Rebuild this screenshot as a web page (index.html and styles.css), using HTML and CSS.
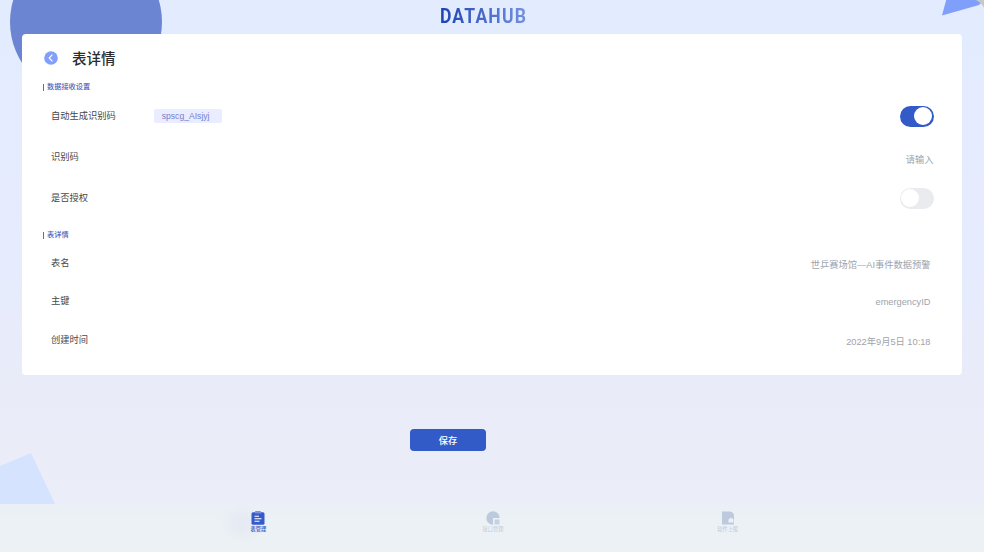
FILE: index.html
```html
<!DOCTYPE html>
<html lang="zh-CN">
<head>
<meta charset="utf-8">
<title>DATAHUB</title>
<link rel="stylesheet" href="styles.css">
</head>
<body>
<div class="app">
  <svg class="backdrop" viewBox="0 0 984 552" aria-hidden="true">
    <circle cx="86" cy="22" r="76" fill="#6b85d2"/>
    <path d="M947 -3L942 15.500L979 5L984 0V-3Z" fill="#809ffb"/>
    <path d="M976 0H984V8Q982 3 976 0Z" fill="#c6c7c9"/>
    <path d="M0 466L31 453L55 504H0Z" fill="#d5e3ff"/>
  </svg>
  <header class="header"><h1 class="logo">DATAHUB</h1></header>
  <main class="card">
    <div class="title-row">
      <svg class="back" viewBox="0 0 14 14"><circle cx="7" cy="7" r="6.800" fill="#82a0fa"/><path d="M8.400 3.700L5.200 7L8.400 10.300" fill="none" stroke="#fff" stroke-width="1.100"/></svg>
      <h2 class="title">表详情</h2>
    </div>
    <h3 class="section">数据接收设置</h3>
    <div class="rows rows-settings">
      <div class="row"><span class="label">自动生成识别码</span><span class="tag">spscg_AIsjyj</span><span class="switch on"></span></div>
      <div class="row"><span class="label">识别码</span><span class="value placeholder">请输入</span></div>
      <div class="row"><span class="label">是否授权</span><span class="switch"></span></div>
    </div>
    <h3 class="section">表详情</h3>
    <div class="rows rows-detail">
      <div class="row"><span class="label">表名</span><span class="value">世乒赛场馆—AI事件数据预警</span></div>
      <div class="row"><span class="label">主键</span><span class="value">emergencyID</span></div>
      <div class="row"><span class="label">创建时间</span><span class="value">2022年9月5日 10:18</span></div>
    </div>
  </main>
  <div class="actions"><button class="save">保存</button></div>
  <nav class="tabs">
    <div class="tab active">
      <svg viewBox="0 0 14 14"><rect x=".5" y="1.200" width="13" height="12.600" rx="1.500" fill="#355bcb"/><rect x="4" y="0" width="6" height="2.500" rx=".6" fill="#7f8fdb"/><path d="M3.500 5.300H8M3.500 7.700H10.500M3.500 10.200H8.500" stroke="#fff" stroke-width="1.100"/></svg>
      <span>表管理</span>
    </div>
    <div class="tab">
      <svg viewBox="0 0 14 14"><path d="M7 0.300A6.700 6.700 0 1 0 7 13.700V7H13.700A6.700 6.700 0 0 0 7 .3Z" fill="#bdc9dd"/><rect x="8.500" y="8.500" width="5" height="5" rx=".5" fill="#c7d1e1"/></svg>
      <span>接口管理</span>
    </div>
    <div class="tab">
      <svg viewBox="0 0 14 14"><path d="M1 .5H9Q13 1 13 5V13.500H1Z" fill="#bdc9dd"/><path d="M7.500 8.500L10 6.500L12.500 8.500V11.500H7.500Z" fill="#edf1f7"/></svg>
      <span>软件上报</span>
    </div>
  </nav>
</div>
</body>
</html>
```
FILE: styles.css
```css
* { box-sizing: border-box; }
body { margin: 0; font-family: "Liberation Sans", "Noto Sans CJK SC", sans-serif; }
h1, h2, h3 { margin: 0; }
.app {
  position: relative;
  display: flex;
  flex-direction: column;
  width: 984px;
  height: 552px;
  overflow: hidden;
  background: linear-gradient(180deg, #e3ebff 0%, #e6ecfd 50%, #e9ebf8 70%, #ebeef8 90%);
}
.backdrop { position: absolute; inset: 0; width: 984px; height: 552px; }
.header { position: relative; height: 34px; display: flex; justify-content: center; }
.logo {
  font: 700 20px/32px Roboto, sans-serif;
  letter-spacing: 1.300px;
  margin-right: 17px;
  transform: scaleX(.88);
  color: transparent;
  background: linear-gradient(90deg, #1b43b2, #7491df);
  background-clip: text;
}
.card {
  position: relative;
  width: 940px;
  height: 341px;
  margin-left: 22px;
  padding: 12px 28.500px 0 21px;
  border-radius: 4px;
  background: #fff;
}
.title-row { display: flex; align-items: center; gap: 14px; height: 25px; padding-left: 1px; }
.back { width: 14px; height: 14px; margin-bottom: 1px; }
.title { font-size: 14.500px; font-weight: 500; line-height: 24px; color: #2c2c30; }
.section {
  display: flex;
  align-items: center;
  gap: 3px;
  height: 10px;
  margin-top: 11px;
  font-size: 7.200px;
  font-weight: 500;
  line-height: 10px;
  color: #4a62ba;
}
.section::before { content: ""; width: 1px; height: 7px; background: #5570bb; }
.rows { display: flex; flex-direction: column; padding-left: 8px; }
.row { display: flex; align-items: center; }
.rows-settings { padding-top: 3.500px; }
.rows-settings .row { height: 41px; }
.rows-settings + .section { margin-top: 11.500px; }
.rows-detail { padding-top: 3px; }
.rows-detail .row { height: 38.500px; }
.label { margin-bottom: 2px; font-size: 9.250px; color: #47484c; }
.rows-detail .label { margin-bottom: 1px; }
.tag {
  margin-left: 38px;
  margin-bottom: 1px;
  width: 68px;
  height: 14px;
  padding-left: 8px;
  border-radius: 2px;
  background: #e9edff;
  color: #747fce;
  font-size: 8.600px;
  line-height: 14px;
  white-space: nowrap;
}
.value { margin: 3px 3px 0 auto; font-size: 9.250px; color: #a0a3aa; }
.placeholder { margin-right: 0; }
.switch { width: 34px; height: 21px; margin-left: auto; padding: 1.500px; border-radius: 11px; background: #e9ebee; display: flex; }
.switch::before { content: ""; width: 18px; height: 18px; border-radius: 50%; background: #fff; }
.switch.on { background: #335bc8; justify-content: flex-end; }
.actions { position: relative; height: 129px; padding: 54px 0 0 410px; }
.save {
  display: block;
  width: 76px;
  height: 22px;
  padding: 0;
  border: 0;
  border-radius: 4px;
  background: #335bc8;
  color: #fff;
  font: 500 9.200px/21px "Noto Sans CJK SC", sans-serif;
}
.tabs {
  position: relative;
  height: 48px;
  padding: 0 139px 0 141px;
  display: grid;
  grid-template-columns: repeat(3, 1fr);
  background: radial-gradient(ellipse 22px 20px at 242px 19px, #e4e9f3, transparent), linear-gradient(#ebeff7, #ecf1f5 30%);
}
.tab { display: flex; flex-direction: column; align-items: center; padding-top: 7px; font-size: 5.200px; line-height: 8px; color: #bdc8da; }
.tab svg { width: 14px; height: 14px; }
.tab.active { color: #4d69ca; font-weight: 700; }
```
